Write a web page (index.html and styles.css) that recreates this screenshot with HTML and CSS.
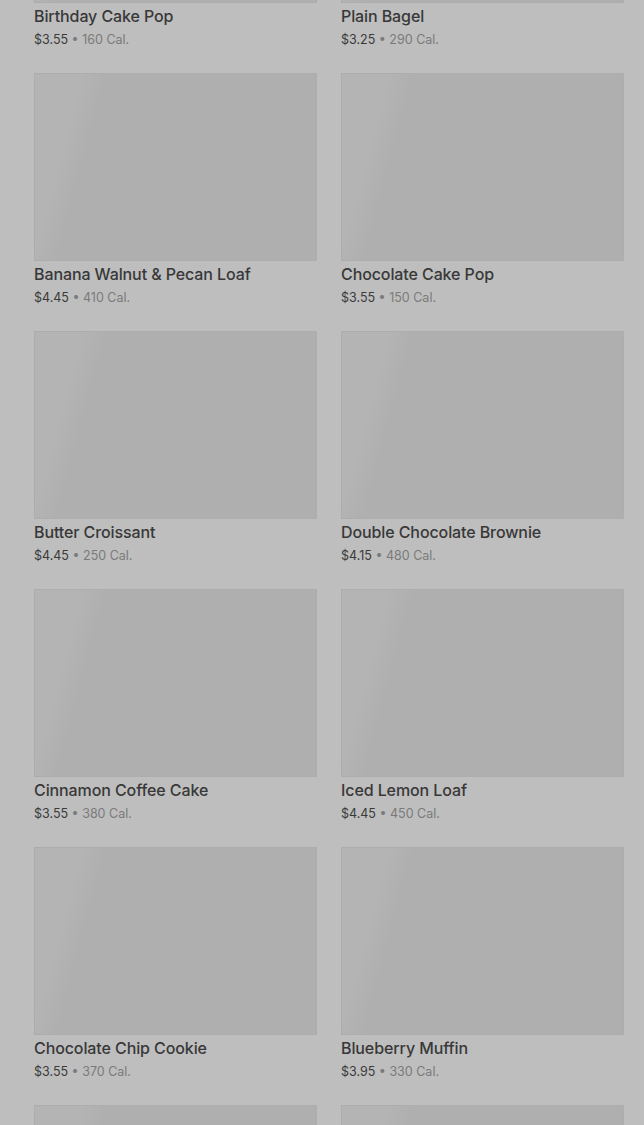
FILE: index.html
```html
<!DOCTYPE html>
<html lang="en">
<head>
  <meta charset="UTF-8" />
  <title>Bakery</title>
  <link rel="stylesheet" href="styles.css">
</head>
<body>

  <div class="grid">
    <div class="item"><div class="photo"></div><div class="name">Birthday Cake Pop</div><div class="meta"><span class="price">$3.55</span> • 160 Cal.</div></div>
    <div class="item"><div class="photo"></div><div class="name">Plain Bagel</div><div class="meta"><span class="price">$3.25</span> • 290 Cal.</div></div>
    <div class="item"><div class="photo"></div><div class="name">Banana Walnut &amp; Pecan Loaf</div><div class="meta"><span class="price">$4.45</span> • 410 Cal.</div></div>
    <div class="item"><div class="photo"></div><div class="name">Chocolate Cake Pop</div><div class="meta"><span class="price">$3.55</span> • 150 Cal.</div></div>
    <div class="item"><div class="photo"></div><div class="name">Butter Croissant</div><div class="meta"><span class="price">$4.45</span> • 250 Cal.</div></div>
    <div class="item"><div class="photo"></div><div class="name">Double Chocolate Brownie</div><div class="meta"><span class="price">$4.15</span> • 480 Cal.</div></div>
    <div class="item"><div class="photo"></div><div class="name">Cinnamon Coffee Cake</div><div class="meta"><span class="price">$3.55</span> • 380 Cal.</div></div>
    <div class="item"><div class="photo"></div><div class="name">Iced Lemon Loaf</div><div class="meta"><span class="price">$4.45</span> • 450 Cal.</div></div>
    <div class="item"><div class="photo"></div><div class="name">Chocolate Chip Cookie</div><div class="meta"><span class="price">$3.55</span> • 370 Cal.</div></div>
    <div class="item"><div class="photo"></div><div class="name">Blueberry Muffin</div><div class="meta"><span class="price">$3.95</span> • 330 Cal.</div></div>
    <div class="item"><div class="photo"></div></div>
    <div class="item"><div class="photo"></div></div>
  </div>

</body>
</html>
```

FILE: styles.css
```css
html, body {
  margin: 0;
  background: #bebebe;
}

body {
  font-family: Inter, "Noto Sans", sans-serif;
  overflow: hidden;
}

.grid {
  display: grid;
  grid-template-columns: 283px 283px;
  column-gap: 24px;
  row-gap: 22px;
  padding: 0 20px 0 34px;
  margin-top: -185px;
}

.photo {
  height: 186px;
  border: 1px solid #adadad;
  background: linear-gradient(105deg, #b4b4b4 0%, #b4b4b4 14%, #afafaf 22%, #afafaf 100%);
}

.name {
  margin-top: 1px;
  font-size: 16px;
  line-height: 24px;
  font-weight: 500;
  letter-spacing: -0.1px;
  color: #383838;
}

.meta {
  margin-top: 1px;
  font-size: 12.5px;
  line-height: 22px;
  color: #7a7a7a;
}

.meta .price {
  color: #3a3a3a;
}
```
